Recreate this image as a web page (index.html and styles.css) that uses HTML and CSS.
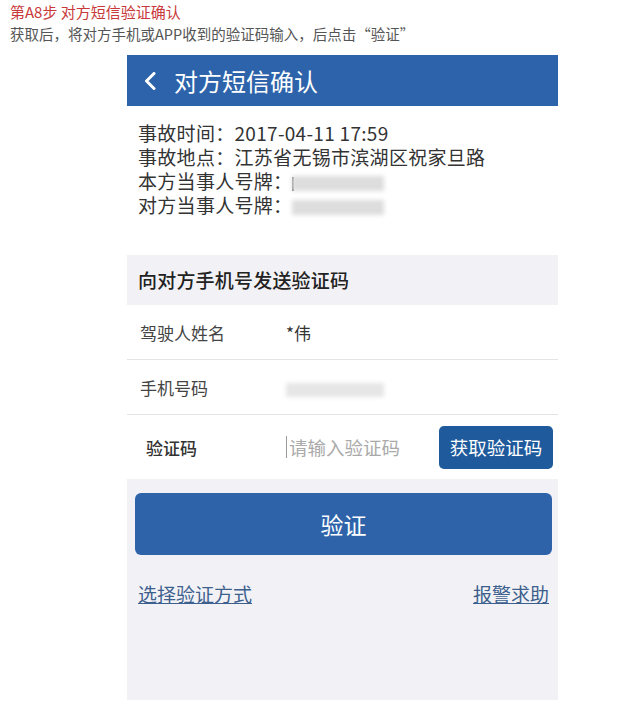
FILE: index.html
```html
<!DOCTYPE html>
<html lang="zh-CN">
<head>
    <meta charset="UTF-8">
    <meta name="viewport" content="width=device-width, initial-scale=1.0">
    <title>对方短信验证确认</title>
    <link rel="stylesheet" href="styles.css">
</head>
<body>
    <div class="caption">
        <p class="step">第A8步 对方短信验证确认</p>
        <p class="note">获取后，将对方手机或APP收到的验证码输入，后点击“验证”</p>
    </div>

    <div class="phone">
        <header class="topbar">
            <svg class="back" width="12" height="18" viewBox="0 0 12 18">
                <polyline points="10,1.5 2.5,9 10,16.5" fill="none" stroke="#fff" stroke-width="3" stroke-linecap="round" stroke-linejoin="round"/>
            </svg>
            <h1>对方短信确认</h1>
        </header>

        <div class="info">
            <p>事故时间：2017-04-11 17:59</p>
            <p>事故地点：江苏省无锡市滨湖区祝家旦路</p>
            <p>本方当事人号牌：<span class="mark"></span><span class="blur"></span></p>
            <p>对方当事人号牌：<span class="blur"></span></p>
        </div>

        <div class="section-title">向对方手机号发送验证码</div>

        <div class="form">
            <div class="row">
                <span class="label">驾驶人姓名</span>
                <span class="value">*伟</span>
            </div>
            <div class="row">
                <span class="label">手机号码</span>
                <span class="value"><span class="blur blur-phone"></span></span>
            </div>
            <div class="row row-code">
                <span class="label label-code">验证码</span>
                <span class="code-input"><span class="cursor"></span>请输入验证码</span>
                <button class="get-code">获取验证码</button>
            </div>
        </div>

        <div class="actions">
            <button class="verify">验证</button>
            <div class="links">
                <a href="#">选择验证方式</a>
                <a href="#">报警求助</a>
            </div>
        </div>
    </div>
</body>
</html>
```

FILE: styles.css
```css
body {
    font-family: "Noto Sans CJK SC", "Noto Sans", sans-serif;
    margin: 0;
    padding: 0;
    background-color: #fff;
}

.caption {
    padding: 1px 10px 0;
}

.caption p {
    margin: 0;
    line-height: 22px;
}

.step {
    color: #c8383a;
    font-size: 15px;
}

.note {
    color: #555;
    font-size: 14.5px;
}

.phone {
    margin: 10px 0 0 127px;
    width: 431px;
    height: 645px;
    background-color: #f2f2f6;
}

.topbar {
    background-color: #2d63aa;
    height: 51px;
    display: flex;
    align-items: center;
    padding-left: 17px;
}

.topbar .back {
    margin-right: 18px;
}

.topbar h1 {
    margin: 0;
    color: #fff;
    font-size: 24px;
    font-weight: normal;
    line-height: 51px;
}

.info {
    background-color: #fff;
    padding: 15px 11px 38px;
}

.info p {
    margin: 0;
    font-size: 19px;
    letter-spacing: 0.3px;
    line-height: 24px;
    color: #333;
}

.mark {
    display: inline-block;
    width: 2px;
    height: 14px;
    margin-right: -2px;
    vertical-align: middle;
    background-color: #777;
    filter: blur(0.5px);
}

.blur {
    display: inline-block;
    width: 92px;
    height: 15px;
    vertical-align: middle;
    background-color: #ddd;
    filter: blur(2px);
}

.blur-phone {
    width: 98px;
    height: 14px;
    background-color: #e6e6e6;
}

.section-title {
    height: 50px;
    line-height: 50px;
    padding-left: 11px;
    font-size: 19px;
    letter-spacing: 0.2px;
    font-weight: 500;
    color: #222;
}

.form {
    background-color: #fff;
}

.row {
    display: flex;
    align-items: center;
    height: 54px;
    padding-left: 13px;
    border-bottom: 1px solid #e4e4e8;
    font-size: 17px;
    color: #444;
}

.label {
    width: 146px;
}

.value {
    color: #333;
}

.row-code {
    height: 64px;
    border-bottom: none;
}

.label-code {
    width: 140px;
    padding-left: 6px;
    font-weight: 500;
    color: #333;
}

.code-input {
    flex: 1;
    display: flex;
    align-items: center;
    font-size: 18.5px;
    color: #aaa;
}

.cursor {
    width: 1px;
    height: 22px;
    background-color: #999;
    margin-right: 2px;
}

.get-code {
    width: 114px;
    height: 43px;
    margin-right: 5px;
    border: none;
    border-radius: 5px;
    background-color: #1e5a9c;
    color: #fff;
    font-family: inherit;
    font-size: 18.5px;
    padding: 0;
}

.actions {
    padding: 14px 6px 0 8px;
}

.verify {
    display: block;
    width: 100%;
    height: 62px;
    border: none;
    border-radius: 6px;
    background-color: #2e63aa;
    color: #fff;
    font-family: inherit;
    font-size: 23px;
}

.links {
    display: flex;
    justify-content: space-between;
    margin-top: 27px;
    padding: 0 3px 0 3px;
}

.links a {
    font-size: 19px;
    line-height: 24px;
    color: #3d5f8d;
}
```
